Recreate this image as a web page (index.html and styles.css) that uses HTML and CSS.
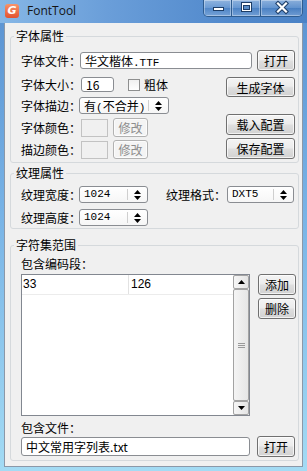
FILE: index.html
```html
<!doctype html>
<html lang="zh-CN">
    <head>
        <meta charset="UTF-8" />
        <title>FontTool</title>
        <link rel="stylesheet" href="styles.css">
    </head>
    <body>
        <div class="window">
            <div class="titlebar">
                <span class="app-icon">G</span>
                <span class="app-title">FontTool</span>
                <div class="caption">
                    <span class="cap cap-min">
                        <svg width="28" height="16" viewBox="0 0 28 16">
                            <rect x="9.5" y="7.5" width="10" height="3" fill="#fff" stroke="#1d3d66" />
                        </svg>
                    </span>
                    <span class="cap cap-max">
                        <svg width="29" height="16" viewBox="0 0 29 16">
                            <rect x="9.5" y="2.5" width="10" height="9" fill="#fff" stroke="#1d3d66" />
                            <rect x="11.5" y="5.5" width="6" height="4" fill="#5a8cc6" stroke="#1d3d66" />
                        </svg>
                    </span>
                    <span class="cap cap-close">
                        <svg width="41" height="16" viewBox="0 0 41 16">
                            <path d="M17 3.5 L25 11.5 M25 3.5 L17 11.5" stroke="#1d3d66" stroke-width="4.2" stroke-linecap="square" />
                            <path d="M17 3.5 L25 11.5 M25 3.5 L17 11.5" stroke="#fff" stroke-width="2.2" stroke-linecap="square" />
                        </svg>
                    </span>
                </div>
            </div>

            <div class="client">
                <!-- 字体属性 -->
                <fieldset class="group group-font">
                    <legend>字体属性</legend>
                    <div class="group-body">
                        <div class="row row-file">
                            <span class="label label-file">字体文件：</span>
                            <span class="edit edit-file">华文楷体<span class="mono">.TTF</span></span>
                            <button class="btn btn-open">打开</button>
                        </div>
                        <div class="font-split">
                            <div class="font-left">
                                <div class="row row-size">
                                    <span class="label">字体大小：</span>
                                    <span class="edit edit-size">16</span>
                                    <span class="check"></span>
                                    <span class="check-label">粗体</span>
                                </div>
                                <div class="row row-stroke">
                                    <span class="label label-combo">字体描边：</span>
                                    <span class="combo combo-stroke">
                                        <span class="combo-text">有<span class="mono">(</span>不合并<span class="mono">)</span></span>
                                        <span class="combo-arrow">
                                            <svg width="7" height="10" viewBox="0 0 7 10"><path d="M0 4 L7 4 L3.5 0 Z M0 6 L7 6 L3.5 10 Z" fill="#000" /></svg>
                                        </span>
                                    </span>
                                </div>
                                <div class="row row-color">
                                    <span class="label">字体颜色：</span>
                                    <span class="swatch"></span>
                                    <button class="btn btn-edit" disabled>修改</button>
                                </div>
                                <div class="row row-scolor">
                                    <span class="label">描边颜色：</span>
                                    <span class="swatch"></span>
                                    <button class="btn btn-edit" disabled>修改</button>
                                </div>
                            </div>
                            <div class="font-right">
                                <button class="btn btn-wide btn-gen">生成字体</button>
                                <button class="btn btn-wide btn-load">载入配置</button>
                                <button class="btn btn-wide btn-save">保存配置</button>
                            </div>
                        </div>
                    </div>
                </fieldset>

                <!-- 纹理属性 -->
                <fieldset class="group group-tex">
                    <legend>纹理属性</legend>
                    <div class="group-body">
                        <div class="row row-tex">
                            <span class="label label-combo">纹理宽度：</span>
                            <span class="combo combo-size">
                                <span class="combo-text mono">1024</span>
                                <span class="combo-arrow">
                                    <svg width="7" height="10" viewBox="0 0 7 10"><path d="M0 4 L7 4 L3.5 0 Z M0 6 L7 6 L3.5 10 Z" fill="#000" /></svg>
                                </span>
                            </span>
                            <span class="label label-format">纹理格式：</span>
                            <span class="combo combo-format">
                                <span class="combo-text mono">DXT5</span>
                                <span class="combo-arrow">
                                    <svg width="7" height="10" viewBox="0 0 7 10"><path d="M0 4 L7 4 L3.5 0 Z M0 6 L7 6 L3.5 10 Z" fill="#000" /></svg>
                                </span>
                            </span>
                        </div>
                        <div class="row row-tex row-tex2">
                            <span class="label label-combo">纹理高度：</span>
                            <span class="combo combo-size">
                                <span class="combo-text mono">1024</span>
                                <span class="combo-arrow">
                                    <svg width="7" height="10" viewBox="0 0 7 10"><path d="M0 4 L7 4 L3.5 0 Z M0 6 L7 6 L3.5 10 Z" fill="#000" /></svg>
                                </span>
                            </span>
                        </div>
                    </div>
                </fieldset>

                <!-- 字符集范围 -->
                <fieldset class="group group-chars">
                    <legend>字符集范围</legend>
                    <div class="group-body">
                        <div class="caption-label">包含编码段：</div>
                        <div class="list-row">
                            <div class="listview">
                                <div class="list-items">
                                    <div class="list-item">
                                        <span class="col col-a">33</span>
                                        <span class="col col-b">126</span>
                                    </div>
                                </div>
                                <div class="vscroll">
                                    <span class="sb-btn">
                                        <svg width="7" height="4" viewBox="0 0 7 4"><path d="M0 4 L7 4 L3.5 0 Z" fill="#000" /></svg>
                                    </span>
                                    <span class="sb-thumb"><span class="grip"></span></span>
                                    <span class="sb-btn">
                                        <svg width="7" height="4" viewBox="0 0 7 4"><path d="M0 0 L7 0 L3.5 4 Z" fill="#000" /></svg>
                                    </span>
                                </div>
                            </div>
                            <div class="list-buttons">
                                <button class="btn btn-open">添加</button>
                                <button class="btn btn-open">删除</button>
                            </div>
                        </div>
                        <div class="caption-label caption-file">包含文件：</div>
                        <div class="row row-charfile">
                            <span class="edit edit-charfile">中文常用字列表.txt</span>
                            <button class="btn btn-open">打开</button>
                        </div>
                    </div>
                </fieldset>
            </div>
        </div>
    </body>
</html>
```

FILE: styles.css
```css
body {
    margin: 0;
    font-family: "Noto Sans CJK SC", "Liberation Sans", sans-serif;
    font-size: 12px;
    color: #000;
}
.mono {
    font-family: "Liberation Mono", monospace;
    font-size: 11px;
}
.window {
    width: 307px;
    height: 471px;
    display: flex;
    flex-direction: column;
    background: linear-gradient(#5b92d1, #78b3e6 45%, #a3dbf4);
}
.titlebar {
    height: 23px;
    flex: none;
    display: flex;
    align-items: flex-start;
    background: linear-gradient(90deg, #86b7e6, #6a9ed9 35%, #5189cc 75%, #4a82c6);
}
.app-icon {
    width: 14px;
    height: 14px;
    margin: 4px 0 0 5px;
    border-radius: 3px;
    background: linear-gradient(#f7946a, #e4522f);
    color: #fff;
    font-family: "DejaVu Sans", sans-serif;
    font-size: 11px;
    font-weight: bold;
    font-style: italic;
    line-height: 14px;
    text-align: center;
}
.app-title {
    margin: 3px 0 0 8px;
    font-family: "Open Sans", sans-serif;
    font-size: 12px;
    line-height: 16px;
    color: #141414;
}
.caption {
    margin-left: auto;
    margin-right: 4px;
    display: flex;
    border: 1px solid #2e5c90;
    border-top: none;
    border-radius: 0 0 5px 5px;
    overflow: hidden;
}
.cap {
    height: 16px;
    display: block;
    background: linear-gradient(rgba(255, 255, 255, 0.35), rgba(255, 255, 255, 0.12) 50%, rgba(20, 60, 120, 0.08) 50%, rgba(255, 255, 255, 0.2));
    box-shadow: inset 0 0 0 1px rgba(255, 255, 255, 0.35);
}
.cap svg {
    display: block;
}
.cap-min {
    width: 27px;
    border-right: 1px solid #2e5c90;
}
.cap-max {
    width: 28px;
    border-right: 1px solid #2e5c90;
}
.cap-close {
    width: 41px;
}
.client {
    flex: 1;
    margin: 0 4px 4px;
    padding: 6px 3px 2px 5px;
    background: #f0f0f0;
    border: 1px solid #8b98a8;
    border-top: none;
}

/* group boxes */
.group {
    margin: 0;
    padding: 0;
    border: 1px solid #d5d9dc;
    border-radius: 3px;
}
.group legend {
    margin-left: 3px;
    padding: 0 2px;
    line-height: 14px;
}
.group-tex {
    margin-top: 3px;
}
.group-chars {
    margin-top: 9px;
}
.group-body {
    padding: 7px 2px 3px 10px;
}
.row {
    display: flex;
    align-items: center;
}
.label {
    width: 60px;
    flex: none;
    white-space: nowrap;
}
.label-file {
    width: 59px;
}
.label-combo {
    width: 58px;
}

/* controls */
.edit {
    box-sizing: border-box;
    height: 17px;
    padding-left: 4px;
    line-height: 15px;
    background: #fff;
    border: 1px solid #8a8d92;
    border-radius: 3px;
    white-space: nowrap;
}
.btn {
    box-sizing: border-box;
    padding: 0;
    font: inherit;
    color: #000;
    border: 1px solid #707070;
    border-radius: 3px;
    background: linear-gradient(#f4f4f4, #ececec 45%, #dedede 55%, #d2d2d2);
    box-shadow: inset 0 0 0 1px rgba(255, 255, 255, 0.7);
}
.btn:disabled {
    color: #8d8d8d;
    border-color: #b2b2b2;
    background: #f4f4f4;
}
.btn-open {
    width: 38px;
    height: 21px;
}
.row-file {
    height: 21px;
}
.edit-file {
    width: 172px;
}
.row-file .btn-open {
    margin-left: 5px;
}
.font-split {
    margin-top: 5px;
    display: flex;
    justify-content: space-between;
}
.row-size {
    height: 17px;
}
.edit-size {
    width: 33px;
    height: 15px;
    line-height: 13px;
}
.check {
    box-sizing: border-box;
    width: 12px;
    height: 12px;
    margin-left: 14px;
    border: 1px solid #8e8f8f;
    background: linear-gradient(#f0f0f0, #fff);
}
.check-label {
    margin-left: 4px;
}
.row-stroke {
    margin-top: 4px;
    height: 17px;
}
.combo {
    box-sizing: border-box;
    height: 17px;
    display: flex;
    background: linear-gradient(#fff, #f6f6f6);
    border: 1px solid #8a8d92;
    border-radius: 3px;
}
.combo-text {
    flex: 1;
    padding-left: 4px;
    line-height: 15px;
    white-space: nowrap;
}
.combo-arrow {
    width: 19px;
    margin: 2px 0;
    display: flex;
    align-items: center;
    justify-content: center;
    border-left: 1px solid #cfcfcf;
}
.combo-stroke {
    width: 90px;
}
.row-color {
    margin-top: 4px;
    height: 19px;
}
.row-scolor {
    margin-top: 3px;
    height: 19px;
}
.swatch {
    box-sizing: border-box;
    width: 27px;
    height: 18px;
    border: 1px solid #c2c2c2;
    background: #f0f0f0;
}
.btn-edit {
    width: 35px;
    height: 19px;
    margin-left: 5px;
}
.font-right {
    display: flex;
    flex-direction: column;
    padding-right: 1px;
}
.btn-wide {
    width: 69px;
    height: 21px;
}
.btn-gen {
    height: 20px;
    margin-top: 1px;
}
.btn-load {
    margin-top: 17px;
}
.btn-save {
    margin-top: 3px;
}

/* texture group */
.group-tex .group-body {
    padding: 6px 2px 2px 10px;
}
.row-tex {
    height: 17px;
}
.row-tex2 {
    margin-top: 6px;
}
.combo-size {
    width: 69px;
}
.label-format {
    width: 61px;
    margin-left: 18px;
}
.combo-format {
    width: 67px;
}

/* character range group */
.group-chars .group-body {
    padding: 5px 2px 3px 10px;
}
.caption-label {
    line-height: 14px;
}
.list-row {
    margin-top: 3px;
    display: flex;
    align-items: flex-start;
}
.listview {
    box-sizing: border-box;
    width: 229px;
    height: 142px;
    display: flex;
    background: #fff;
    border: 1px solid #828790;
}
.list-items {
    flex: 1;
}
.list-item {
    height: 19px;
    display: flex;
    border-bottom: 1px solid #ececec;
    font-family: "Liberation Sans", sans-serif;
    line-height: 19px;
}
.col-a {
    width: 105px;
    padding-left: 1px;
    border-right: 1px solid #e2e2e2;
}
.col-b {
    padding-left: 2px;
}
.vscroll {
    width: 16px;
    display: flex;
    flex-direction: column;
    background: #ececec;
}
.sb-btn {
    box-sizing: border-box;
    height: 14px;
    display: flex;
    align-items: center;
    justify-content: center;
    border: 1px solid #a3a3a3;
    border-radius: 2px;
    background: linear-gradient(90deg, #f6f6f6, #e4e4e4);
}
.sb-thumb {
    flex: 1;
    display: flex;
    align-items: center;
    justify-content: center;
    border: 1px solid #a3a3a3;
    border-radius: 2px;
    background: linear-gradient(90deg, #f4f4f4, #e6e6e6);
}
.grip {
    width: 7px;
    height: 5px;
    background: repeating-linear-gradient(#9a9a9a 0 1px, transparent 1px 2px);
}
.list-buttons {
    margin-left: 8px;
    display: flex;
    flex-direction: column;
    gap: 3px;
}
.caption-file {
    margin-top: 5px;
}
.row-charfile {
    margin-top: 1px;
    height: 21px;
}
.edit-charfile {
    width: 229px;
    height: 19px;
    line-height: 17px;
}
.row-charfile .btn-open {
    margin-left: 7px;
}
```
